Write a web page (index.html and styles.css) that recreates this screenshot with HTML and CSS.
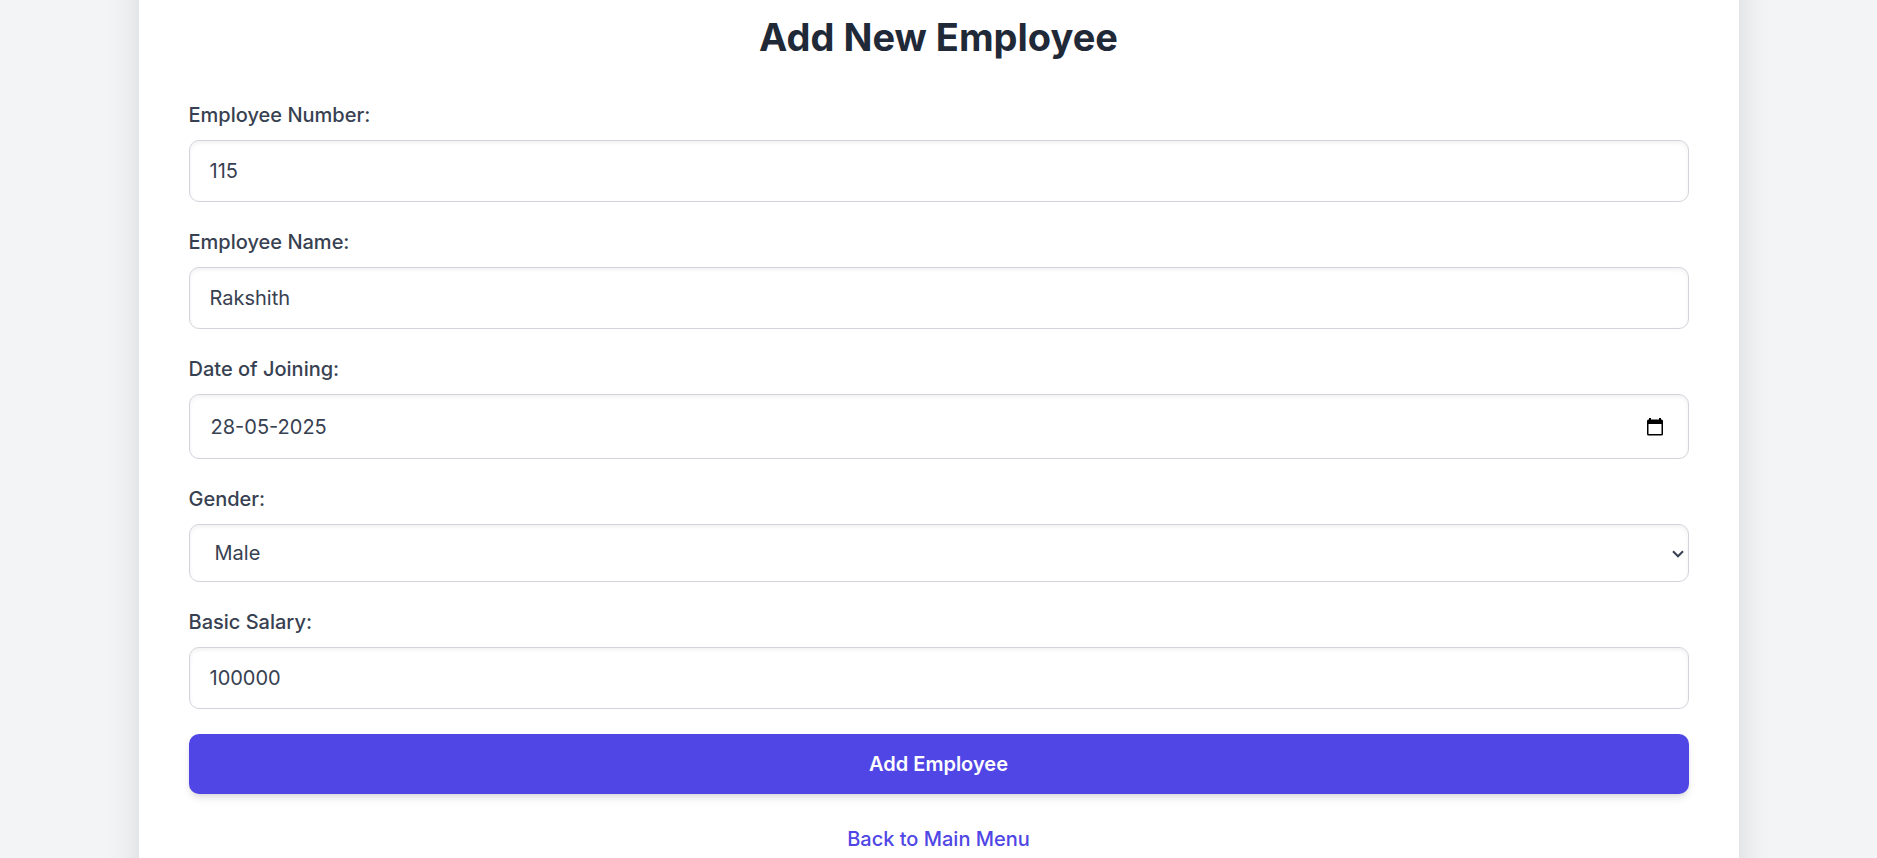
FILE: index.html
```html
<!DOCTYPE html>
<html lang="en">
<head>
<meta charset="utf-8">
<meta name="viewport" content="width=device-width, initial-scale=1">
<title>Add New Employee</title>
<link rel="stylesheet" href="styles.css">
</head>
<body>
<div class="page">
  <main class="card">
    <h1 class="title">Add New Employee</h1>
    <form class="form">
      <div class="field">
        <label class="label" for="emp-number">Employee Number:</label>
        <input class="control" id="emp-number" type="text" inputmode="numeric" value="115">
      </div>
      <div class="field">
        <label class="label" for="emp-name">Employee Name:</label>
        <input class="control" id="emp-name" type="text" value="Rakshith" spellcheck="false">
      </div>
      <div class="field">
        <label class="label" for="emp-date">Date of Joining:</label>
        <div class="control-wrap">
          <input class="control control-date" id="emp-date" type="text" value="28-05-2025">
          <button class="date-button" type="button" aria-label="Open calendar">
            <svg class="date-icon" viewBox="0 0 16 18" aria-hidden="true">
              <path fill="currentColor" fill-rule="evenodd" d="M2 0h2v1.5h8V0h2v1.5h.5Q16 1.500 16 3v13q0 1.500-1.500 1.500h-13Q0 17.500 0 16V3Q0 1.500 1.500 1.500H2zM1.500 6v10h13V6z"/>
            </svg>
          </button>
        </div>
      </div>
      <div class="field">
        <label class="label" for="emp-gender">Gender:</label>
        <div class="control-wrap">
          <select class="control control-select" id="emp-gender">
            <option selected>Male</option>
            <option>Female</option>
            <option>Other</option>
          </select>
          <svg class="chevron" viewBox="0 0 12 8" aria-hidden="true">
            <path d="M1 1.300l5 5 5-5" fill="none" stroke="currentColor" stroke-width="2"/>
          </svg>
        </div>
      </div>
      <div class="field">
        <label class="label" for="emp-salary">Basic Salary:</label>
        <input class="control" id="emp-salary" type="text" inputmode="numeric" value="100000">
      </div>
      <button class="submit" type="submit">Add Employee</button>
    </form>
    <a class="back" href="#">Back to Main Menu</a>
  </main>
</div>
</body>
</html>
```
FILE: styles.css
```css
*,
*::before,
*::after {
  box-sizing: border-box;
}

body {
  margin: 0;
  background: #f3f4f6;
  color: #374151;
  font-family: Inter, "Liberation Sans", sans-serif;
  font-size: 20px;
  line-height: 30px;
}

.page {
  display: flex;
  flex-direction: column;
  align-items: center;
  min-height: 100vh;
  overflow: hidden;
}

/* The card bleeds past the top and bottom edges of the page */
.card {
  display: flex;
  flex: 1;
  flex-direction: column;
  width: 100%;
  max-width: 1600px;
  margin: -50px 0;
  padding: 65px 50px 50px;
  background: #fff;
  box-shadow: 0 10px 30px rgba(0, 0, 0, 0.12);
}

.title {
  margin: 0 0 40px;
  color: #1f2937;
  font-size: 38px;
  font-weight: 700;
  line-height: 45px;
  text-align: center;
}

.form {
  display: flex;
  flex-direction: column;
  gap: 25px;
}

.field {
  display: flex;
  flex-direction: column;
  gap: 10px;
}

.label {
  font-weight: 500;
}

.control-wrap {
  position: relative;
  display: flex;
}

.control {
  width: 100%;
  height: 62px;
  padding: 0 20px;
  border: 1px solid #d1d5db;
  border-radius: 10px;
  background: #fff;
  box-shadow: inset 0 2px 4px rgba(0, 0, 0, 0.06);
  color: #374151;
  font: inherit;
}

.control-date {
  height: 65px;
  padding: 0 60px 0 21px;
}

.control-select {
  height: 58px;
  padding: 0 25px;
  appearance: none;
}

.date-button {
  position: absolute;
  top: 0;
  right: 21px;
  display: flex;
  align-items: center;
  height: 100%;
  padding: 0 5px;
  border: 0;
  background: none;
  color: #000;
  cursor: pointer;
}

.date-icon {
  width: 16px;
  height: 18px;
}

.chevron {
  position: absolute;
  top: 26px;
  right: 5px;
  width: 12px;
  height: 8px;
  pointer-events: none;
}

.submit {
  height: 60px;
  padding: 0 20px;
  border: 0;
  border-radius: 10px;
  background: #4f46e5;
  box-shadow: 0 5px 8px -1px rgba(0, 0, 0, 0.1), 0 2px 5px -2px rgba(0, 0, 0, 0.1);
  color: #fff;
  font: inherit;
  font-weight: 600;
  cursor: pointer;
}

.back {
  align-self: center;
  margin-top: 30px;
  color: #4f46e5;
  font-weight: 500;
  text-decoration: none;
}
```
